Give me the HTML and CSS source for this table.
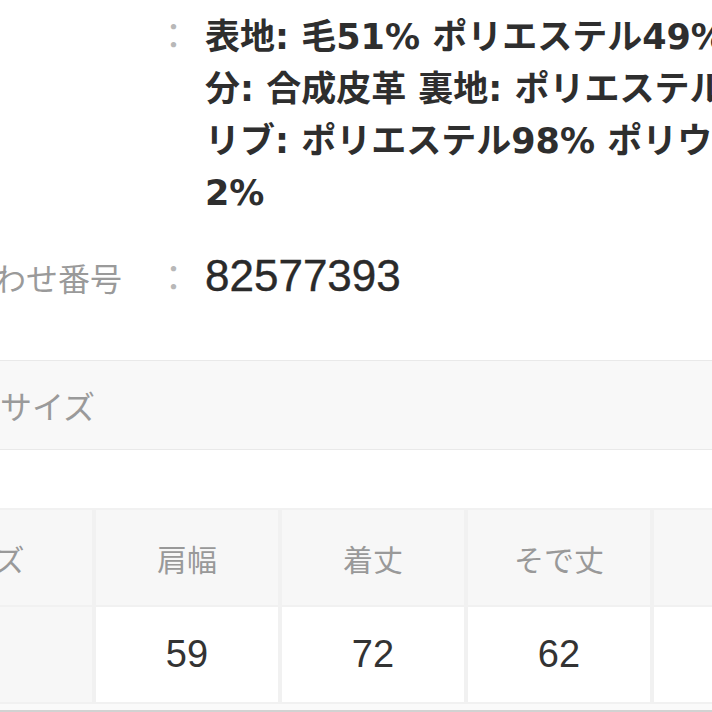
FILE: index.html
```html
<!DOCTYPE html>
<html lang="ja">
<head>
<meta charset="utf-8">
<title>商品詳細</title>
<link rel="stylesheet" href="styles.css">
</head>
<body>
<div class="page">
  <dl class="spec">
    <div class="spec-row">
      <dt class="spec-label">素材</dt>
      <dd class="spec-colon">：</dd>
      <dd class="spec-value material">表地: 毛51% ポリエステル49% 切替部<br>分: 合成皮革 裏地: ポリエステル100%<br>リブ: ポリエステル98% ポリウレタン<br>2%</dd>
    </div>
    <div class="spec-row">
      <dt class="spec-label">問い合わせ番号</dt>
      <dd class="spec-colon">：</dd>
      <dd class="spec-value number">82577393</dd>
    </div>
  </dl>

  <h2 class="size-heading">商品サイズ</h2>

  <div class="size-table-wrap">
    <table class="size-table">
      <colgroup>
        <col class="col-size">
        <col class="col-measure">
        <col class="col-measure">
        <col class="col-measure">
        <col class="col-measure">
      </colgroup>
      <thead>
        <tr>
          <th>サイズ</th>
          <th>肩幅</th>
          <th>着丈</th>
          <th>そで丈</th>
          <th>身幅</th>
        </tr>
      </thead>
      <tbody>
        <tr>
          <th scope="row" class="row-head">F</th>
          <td>59</td>
          <td>72</td>
          <td>62</td>
          <td>64</td>
        </tr>
      </tbody>
    </table>
  </div>
</div>
</body>
</html>
```

FILE: styles.css
```css
html, body {
  margin: 0;
  padding: 0;
  background: #ffffff;
  overflow: hidden;
  height: 712px;
}

body {
  font-family: "Noto Sans CJK JP", sans-serif;
  color: #333333;
}

.page {
  width: 1100px;
  margin-left: -136px;
  padding-top: 8px;
}

/* spec rows */
.spec {
  margin: 0;
  padding-left: 34px;
}

.spec-row {
  display: grid;
  grid-template-columns: 258px 35px 1fr;
  align-items: baseline;
  line-height: 52px;
}

.spec-row + .spec-row {
  margin-top: 31px;
}

.spec-label {
  font-size: 32px;
  color: #9a9a9a;
  white-space: nowrap;
}

.spec-colon {
  margin: 0;
  font-size: 35px;
  color: #b8b8b8;
  text-align: center;
}

.spec-value {
  margin: 0 0 0 14px;
  white-space: nowrap;
}

.material {
  font-family: "DejaVu Sans", "Noto Sans CJK JP", sans-serif;
  font-size: 35px;
  font-weight: 700;
  color: #2e2e2e;
}

.number {
  font-family: "Liberation Sans", sans-serif;
  font-size: 44px;
  color: #2a2a2a;
  -webkit-text-stroke: 0.4px #2a2a2a;
}

/* size heading bar */
.size-heading {
  margin: 57px 0 0;
  height: 88px;
  line-height: 88px;
  padding-left: 72px;
  background: #f8f8f8;
  border-top: 1px solid #e9e9e9;
  border-bottom: 1px solid #e9e9e9;
  font-size: 32px;
  font-weight: 400;
  color: #9a9a9a;
  white-space: nowrap;
}

/* size table */
.size-table-wrap {
  margin-top: 58px;
  padding-bottom: 6px;
  background: #fafafa;
  border-bottom: 2px solid #d2d2d2;
}

.size-table {
  border-collapse: separate;
  border-spacing: 4px 2px;
  background: #f1f1f1;
  table-layout: fixed;
  width: 976px;
}

.col-size {
  width: 224px;
}

.col-measure {
  width: 182px;
}

.size-table th,
.size-table td {
  height: 95px;
  padding: 0;
  text-align: center;
  vertical-align: middle;
  line-height: normal;
}

.size-table thead th {
  background: #f7f7f7;
  font-size: 30px;
  font-weight: 400;
  color: #999999;
}

.size-table .row-head {
  background: #f7f7f7;
  font-weight: 400;
  font-size: 30px;
  color: #999999;
}

.size-table td {
  background: #ffffff;
  font-family: "Liberation Sans", sans-serif;
  font-size: 38px;
  color: #333333;
}
```
